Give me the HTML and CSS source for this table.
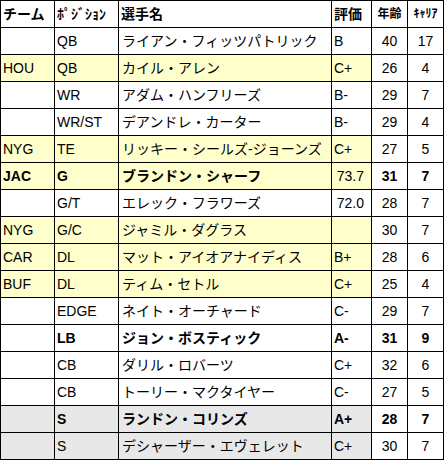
FILE: index.html
```html
<!DOCTYPE html>
<html lang="ja">
<head>
<meta charset="utf-8">
<link rel="stylesheet" href="styles.css">
</head>
<body>
<table class="roster">
  <colgroup>
    <col class="c-team"><col class="c-pos"><col class="c-name"><col class="c-grade"><col class="c-age"><col class="c-car">
  </colgroup>
  <thead>
    <tr>
      <th>チーム</th><th>ﾎﾟｼﾞｼｮﾝ</th><th>選手名</th><th>評価</th><th class="small ctr">年齢</th><th class="small ctr">ｷｬﾘｱ</th>
    </tr>
  </thead>
  <tbody>
    <tr><td></td><td>QB</td><td>ライアン・フィッツパトリック</td><td>B</td><td class="ctr">40</td><td class="ctr">17</td></tr>
    <tr class="yel"><td>HOU</td><td>QB</td><td>カイル・アレン</td><td>C+</td><td class="ctr">26</td><td class="ctr">4</td></tr>
    <tr><td></td><td>WR</td><td>アダム・ハンフリーズ</td><td>B-</td><td class="ctr">29</td><td class="ctr">7</td></tr>
    <tr><td></td><td>WR/ST</td><td>デアンドレ・カーター</td><td>B-</td><td class="ctr">29</td><td class="ctr">4</td></tr>
    <tr class="yel"><td>NYG</td><td>TE</td><td>リッキー・シールズ-ジョーンズ</td><td>C+</td><td class="ctr">27</td><td class="ctr">5</td></tr>
    <tr class="yel bold"><td>JAC</td><td>G</td><td>ブランドン・シャーフ</td><td class="num">73.7</td><td class="ctr">31</td><td class="ctr">7</td></tr>
    <tr><td></td><td>G/T</td><td>エレック・フラワーズ</td><td class="num">72.0</td><td class="ctr">28</td><td class="ctr">7</td></tr>
    <tr class="yel"><td>NYG</td><td>G/C</td><td>ジャミル・ダグラス</td><td></td><td class="ctr">30</td><td class="ctr">7</td></tr>
    <tr class="yel"><td>CAR</td><td>DL</td><td>マット・アイオアナイディス</td><td>B+</td><td class="ctr">28</td><td class="ctr">6</td></tr>
    <tr class="yel"><td>BUF</td><td>DL</td><td>ティム・セトル</td><td>C+</td><td class="ctr">25</td><td class="ctr">4</td></tr>
    <tr><td></td><td>EDGE</td><td>ネイト・オーチャード</td><td>C-</td><td class="ctr">29</td><td class="ctr">7</td></tr>
    <tr class="bold"><td></td><td>LB</td><td>ジョン・ボスティック</td><td>A-</td><td class="ctr">31</td><td class="ctr">9</td></tr>
    <tr><td></td><td>CB</td><td>ダリル・ロバーツ</td><td>C+</td><td class="ctr">32</td><td class="ctr">6</td></tr>
    <tr><td></td><td>CB</td><td>トーリー・マクタイヤー</td><td>C-</td><td class="ctr">27</td><td class="ctr">5</td></tr>
    <tr class="gry bold"><td></td><td>S</td><td>ランドン・コリンズ</td><td>A+</td><td class="ctr">28</td><td class="ctr">7</td></tr>
    <tr class="gry"><td></td><td>S</td><td>デシャーザー・エヴェレット</td><td>C+</td><td class="ctr">30</td><td class="ctr">7</td></tr>
  </tbody>
</table>
</body>
</html>
```
FILE: styles.css
```css
html, body {
  margin: 0;
  padding: 0;
  background: #ffffff;
}

.roster {
  border-collapse: collapse;
  table-layout: fixed;
  width: 444px;
  font-family: "Liberation Sans", "Noto Sans CJK JP", sans-serif;
  font-size: 14px;
  color: #000;
}

.c-team { width: 54px; }
.c-pos { width: 64px; }
.c-name { width: 213px; }
.c-grade { width: 40px; }
.c-age { width: 36px; }
.c-car { width: 36px; }

.roster th,
.roster td {
  border: 1px solid #000;
  height: 26px;
  padding: 0 0 0 2px;
  box-sizing: border-box;
  text-align: left;
  vertical-align: middle;
  white-space: nowrap;
  overflow: hidden;
  line-height: 16px;
}

.roster tr {
  height: 27px;
}

.roster th {
  font-weight: bold;
}

.roster th.small {
  font-size: 12px;
}

.roster td:nth-child(3) {
  padding-left: 3px;
}

.roster .ctr {
  text-align: center;
  padding: 0;
}

.roster .num {
  text-align: right;
  padding-right: 7px;
}

.roster .bold td {
  font-weight: bold;
}

.roster .bold td.num {
  font-weight: normal;
}

.roster .yel td:nth-child(-n+4) {
  background: #ffffcc;
}

.roster .gry td:nth-child(-n+4) {
  background: #e8e8e8;
}
```
